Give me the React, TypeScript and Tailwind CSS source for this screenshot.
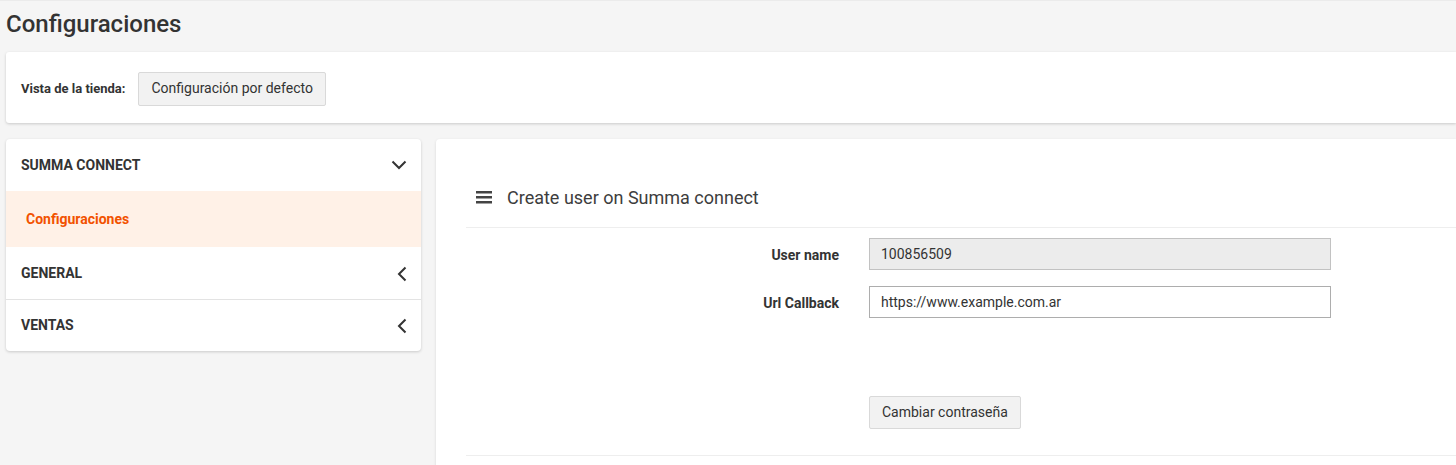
import React from "react";

function ChevronDown() {
  return (
    <svg width="16" height="10" viewBox="0 0 16 10" fill="none">
      <path d="M1.5 1.5L8 8L14.5 1.5" stroke="#333" strokeWidth="2" />
    </svg>
  );
}

function ChevronLeft() {
  return (
    <svg width="10" height="16" viewBox="0 0 10 16" fill="none">
      <path d="M8.5 1.5L2 8L8.5 14.5" stroke="#333" strokeWidth="2" />
    </svg>
  );
}

function Hamburger() {
  return (
    <svg width="16" height="13" viewBox="0 0 16 13">
      <rect x="0" y="0" width="16" height="2.5" fill="#444" />
      <rect x="0" y="5" width="16" height="2.5" fill="#444" />
      <rect x="0" y="10" width="16" height="2.5" fill="#444" />
    </svg>
  );
}

export default function App() {
  return (
    <div
      className="w-full h-[465px] overflow-hidden bg-[#f5f5f5] text-[#333]"
      style={{ fontFamily: "Roboto, 'Liberation Sans', sans-serif" }}
    >
      <div className="border-t border-[#ebebeb]" />
      <h1 className="pt-[9px] pl-[6px] h-[51px] text-[24px] leading-[28px] font-medium text-[#333]">
        Configuraciones
      </h1>
      <div className="ml-[6px] h-[71px] bg-white rounded-l-[3px] shadow-[0_1px_3px_rgba(0,0,0,0.18)] flex items-center pl-[15px]">
        <span className="text-[13px] font-bold text-[#333] translate-y-[1px]">Vista de la tienda:</span>
        <button className="ml-[13px] mt-[2px] h-[34px] px-[12px] bg-[#f2f2f2] border border-[#d9d9d9] rounded-[2px] text-[14px] text-[#333]">
          Configuración por defecto
        </button>
      </div>
      <div className="flex mt-[16px] ml-[6px] gap-[15px]">
        <div className="w-[415px] shrink-0 self-start bg-white rounded-[4px] shadow-[0_1px_3px_rgba(0,0,0,0.18)] overflow-hidden">
          <div className="h-[52px] flex items-center justify-between pl-[15px] pr-[14px]">
            <span className="text-[14px] font-bold uppercase text-[#333]">Summa Connect</span>
            <ChevronDown />
          </div>
          <div className="h-[56px] flex items-center pl-[20px] bg-[#fff1e7]">
            <span className="text-[14px] font-bold text-[#f25200]">Configuraciones</span>
          </div>
          <div className="h-[53px] pt-[1px] flex items-center justify-between pl-[15px] pr-[14px] border-b border-[#e3e3e3]">
            <span className="text-[14px] font-bold uppercase text-[#333]">General</span>
            <ChevronLeft />
          </div>
          <div className="h-[51px] flex items-center justify-between pl-[15px] pr-[14px]">
            <span className="text-[14px] font-bold uppercase text-[#333]">Ventas</span>
            <ChevronLeft />
          </div>
        </div>
        <div className="flex-1 h-[340px] bg-white rounded-tl-[4px] shadow-[0_1px_3px_rgba(0,0,0,0.12)] pl-[30px]">
          <div className="h-[89px] pt-[28px] flex items-center pl-[10px] border-b border-[#eeeeee]">
            <Hamburger />
            <span className="ml-[15px] text-[18px] text-[#3d3d3d]">Create user on Summa connect</span>
          </div>
          <div className="border-b border-[#eeeeee] pt-[10px] pb-[26px]">
            <div className="grid grid-cols-[373px_462px] gap-x-[30px] gap-y-[16px] items-center">
              <label className="text-right text-[14px] font-bold text-[#333] translate-y-[1px]">User name</label>
              <div className="h-[32px] bg-[#ececec] border border-[#c2c2c2] flex items-center pl-[11px] text-[14px] text-[#333]">
                100856509
              </div>
              <label className="text-right text-[14px] font-bold text-[#333] translate-y-[1px]">Url Callback</label>
              <div className="h-[32px] bg-white border border-[#adadad] flex items-center pl-[11px] text-[14px] text-[#333]">
                https://www.example.com.ar
              </div>
              <div />
              <div className="mt-[62px]">
                <button className="h-[33px] px-[12px] bg-[#f2f2f2] border border-[#d9d9d9] rounded-[2px] text-[14px] text-[#333] block">
                  Cambiar contraseña
                </button>
              </div>
            </div>
          </div>
        </div>
      </div>
    </div>
  );
}
